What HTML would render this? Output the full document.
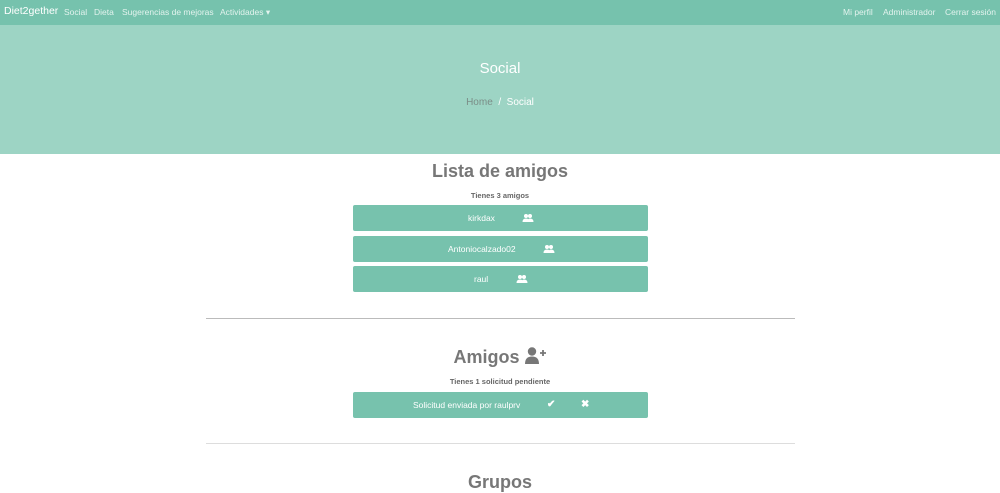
<!DOCTYPE html>
<html><head><meta charset="utf-8"><style>
*{margin:0;padding:0;box-sizing:border-box}
body{width:1000px;height:486px;overflow:hidden;background:#fff;font-family:"Liberation Sans",sans-serif;position:relative}
.nav{position:absolute;top:0;left:0;width:1000px;height:25px;background:#76c2ad;font-size:8.5px;color:#e3f3ee}
.nav span{position:absolute;top:7px;white-space:nowrap}
.brand{font-size:10.5px;color:#fff;top:5px!important}
.banner{position:absolute;top:25px;left:0;width:1000px;height:129px;background:#9dd4c4;text-align:center;color:#fff}
.banner h1{font-weight:normal;font-size:15px;position:absolute;top:35px;width:100%}
.bc{position:absolute;top:72px;width:100%;font-size:10px}
.bc b{font-weight:normal;color:#7b8d87}
h2{position:absolute;width:1000px;text-align:center;color:#777;font-size:18px;font-weight:bold}
.sub{position:absolute;width:1000px;text-align:center;color:#666;font-size:7.5px;font-weight:bold}
.btn{position:absolute;left:353px;width:295px;height:26px;background:#77c2ad;border-radius:2px;color:#fff;font-size:8.5px}
.btn span,.btn svg{position:absolute;top:8px;white-space:nowrap}
.btn svg{top:9px}
hr{position:absolute;left:206px;width:589px;border:0;border-top:1px solid #bbb}
</style></head><body>
<div class="nav">
<span class="brand" style="left:4px">Diet2gether</span>
<span style="left:64px">Social</span><span style="left:94px">Dieta</span>
<span style="left:122px">Sugerencias de mejoras</span><span style="left:220px">Actividades ▾</span>
<span style="left:843px">Mi perfil</span><span style="left:883px">Administrador</span><span style="left:945px">Cerrar sesión</span>
</div>
<div class="banner"><h1>Social</h1><div class="bc"><b>Home</b> &nbsp;/ &nbsp;Social</div></div>
<h2 style="top:161px">Lista de amigos</h2>
<div class="sub" style="top:191px">Tienes 3 amigos</div>
<div class="btn" style="top:205px"><span style="left:115px">kirkdax</span><svg style="left:169px" width="12" height="8" viewBox="0 0 11 8"><circle cx="3.5" cy="2" r="2" fill="#fff"/><circle cx="7.5" cy="2" r="2" fill="#fff"/><path d="M0 8Q0 4.5 3.5 4.5Q7 4.5 7 8ZM5 8Q5 4.5 7.5 4.5Q11 4.5 11 8Z" fill="#fff"/></svg></div>
<div class="btn" style="top:236px"><span style="left:95px">Antoniocalzado02</span><svg style="left:190px" width="12" height="8" viewBox="0 0 11 8"><circle cx="3.5" cy="2" r="2" fill="#fff"/><circle cx="7.5" cy="2" r="2" fill="#fff"/><path d="M0 8Q0 4.5 3.5 4.5Q7 4.5 7 8ZM5 8Q5 4.5 7.5 4.5Q11 4.5 11 8Z" fill="#fff"/></svg></div>
<div class="btn" style="top:266px"><span style="left:121px">raul</span><svg style="left:163px" width="12" height="8" viewBox="0 0 11 8"><circle cx="3.5" cy="2" r="2" fill="#fff"/><circle cx="7.5" cy="2" r="2" fill="#fff"/><path d="M0 8Q0 4.5 3.5 4.5Q7 4.5 7 8ZM5 8Q5 4.5 7.5 4.5Q11 4.5 11 8Z" fill="#fff"/></svg></div>
<hr style="top:318px">
<h2 style="top:347px">Amigos <svg width="22" height="17" viewBox="0 0 22 17" style="vertical-align:-1px"><circle cx="7" cy="4.5" r="4.2" fill="#777"/><path d="M0 17Q0 9.5 7 9.5Q14 9.5 14 17Z" fill="#777"/><path d="M15 6h6M18 3v6" stroke="#777" stroke-width="1.8"/></svg></h2>
<div class="sub" style="top:377px">Tienes 1 solicitud pendiente</div>
<div class="btn" style="top:392px"><span style="left:60px">Solicitud enviada por raulprv</span><span style="left:194px;top:7px;font-weight:bold;font-size:10px">✔</span><span style="left:228px;top:7px;font-weight:bold;font-size:10px">✖</span></div>
<hr style="top:443px;border-color:#ddd">
<h2 style="top:472px">Grupos</h2>
</body></html>
